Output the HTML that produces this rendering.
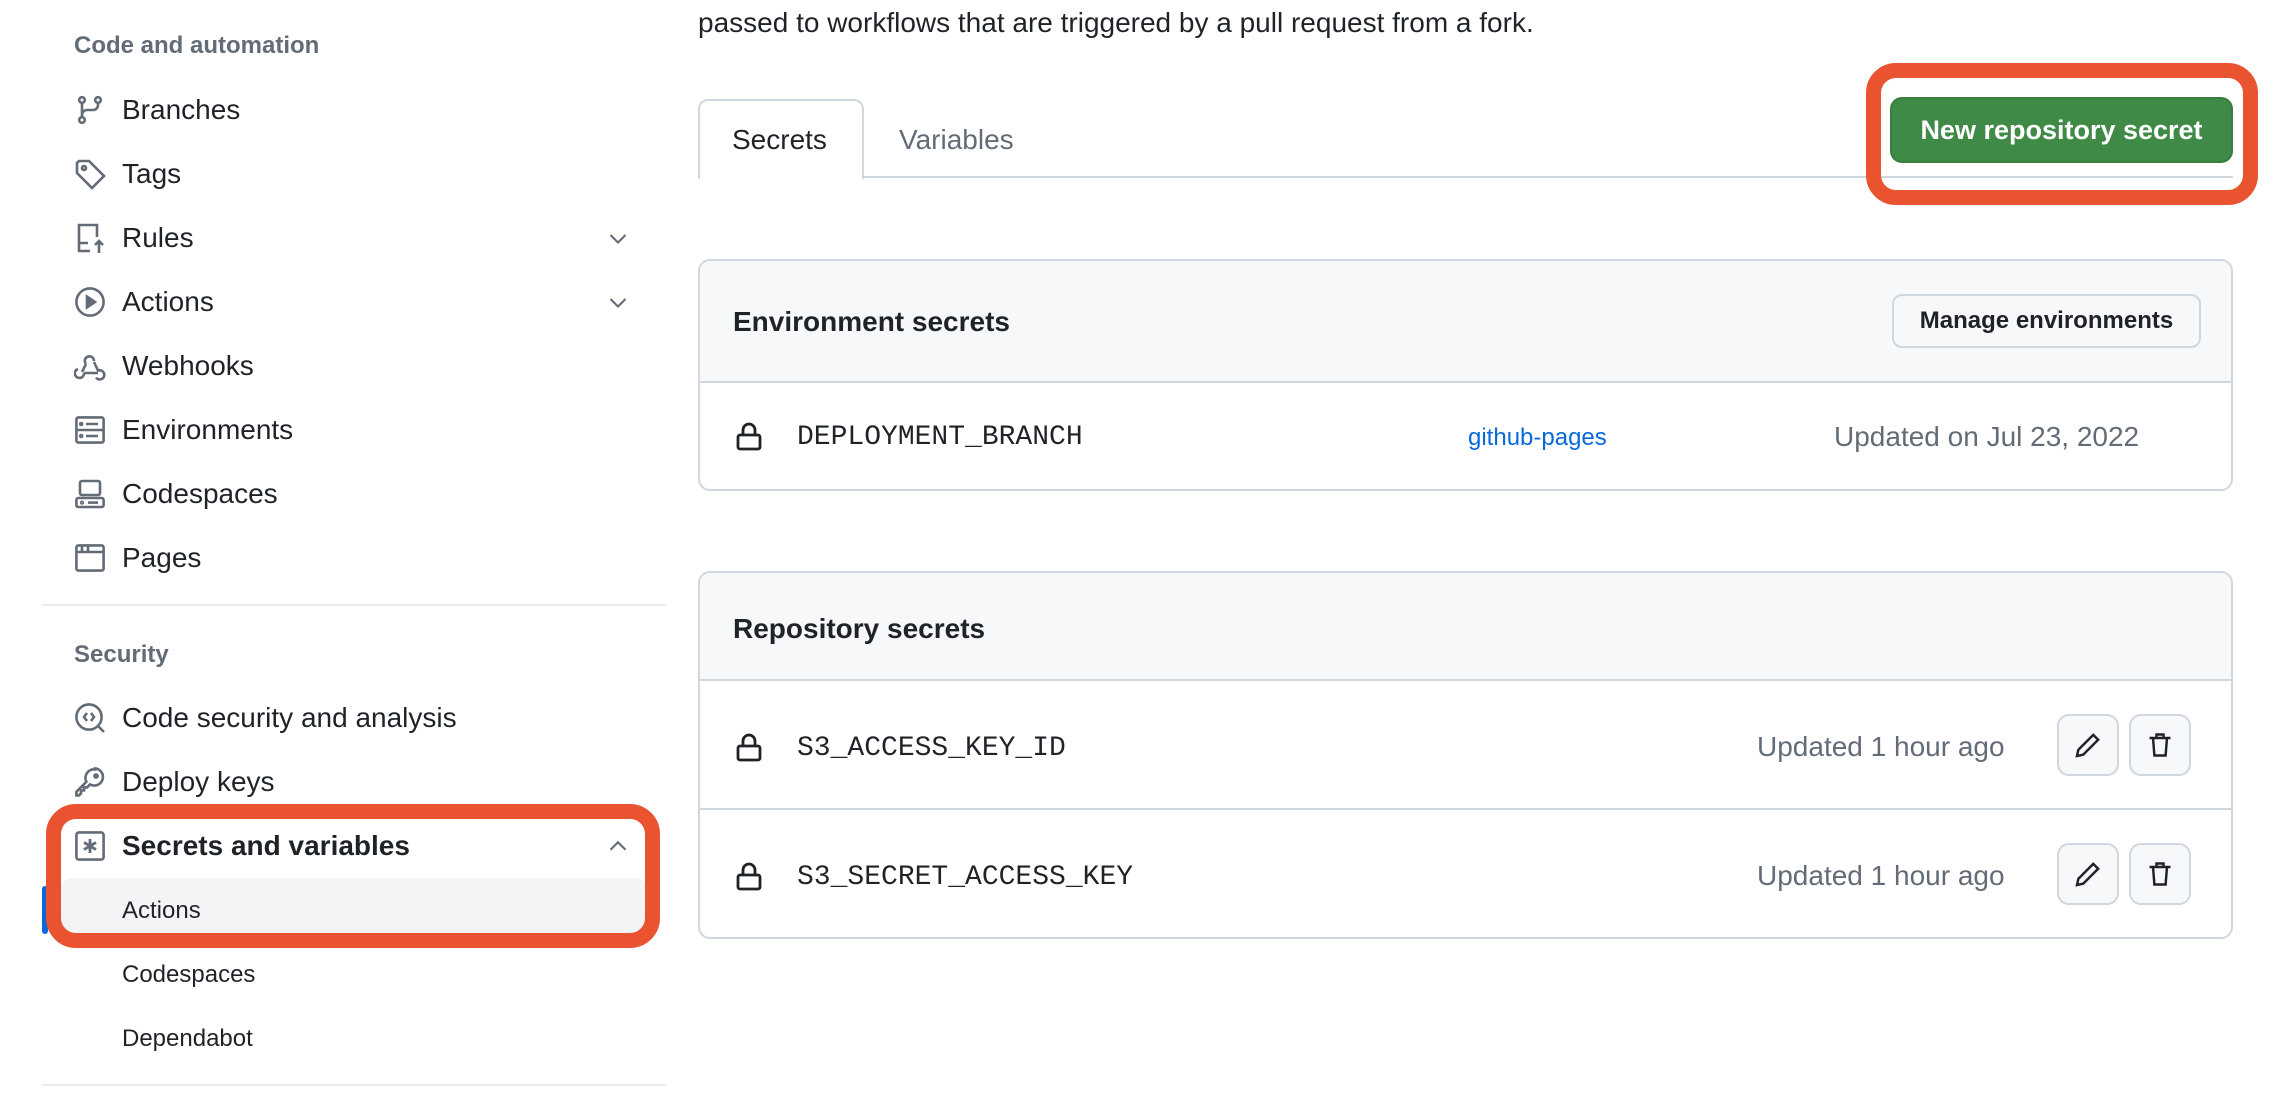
<!DOCTYPE html>
<html><head><meta charset="utf-8"><style>
*{box-sizing:border-box;margin:0;padding:0}
body{width:2280px;height:1112px;background:#fff;font-family:"Liberation Sans",sans-serif;color:#1f2328;position:relative;overflow:hidden}
.a{position:absolute}
.h{font-size:24px;font-weight:bold;color:#636c76}
.it{position:absolute;left:74px;height:40px;display:flex;align-items:center;font-size:28px;color:#1f2328}
.it svg{width:32px;height:32px;margin-right:16px;flex:none}
.sub{position:absolute;left:122px;font-size:24px;color:#1f2328;line-height:30px}
.chev{position:absolute;left:606px;width:24px;height:24px}
.box{position:absolute;left:698px;width:1535px;border:2px solid #d0d7de;border-radius:12px;overflow:hidden}
.bh{background:#f6f8fa;border-bottom:2px solid #d0d7de;position:relative}
.mono{font-family:"Liberation Mono",monospace;font-size:28px;color:#1f2328;position:absolute}
.gray{color:#636c76;font-size:28px;position:absolute}
.ib{position:absolute;width:62px;height:62px;border:2px solid #d0d7de;border-radius:12px;background:#f6f8fa;display:flex;align-items:center;justify-content:center}
</style></head><body>
<div class="a h" style="left:74px;top:32px">Code and automation</div>

<div class="it" style="top:90px"><svg viewBox="0 0 16 16" fill="none" stroke="#636c76" stroke-width="1.3"><circle cx="4" cy="3" r="1.4"/><circle cx="12" cy="3" r="1.4"/><circle cx="4" cy="13" r="1.4"/><path d="M4 4.5v7M12 4.5v1a2.5 2.5 0 0 1-2.5 2.5H6.5A2.5 2.5 0 0 0 4 10.5"/></svg>Branches</div>
<div class="it" style="top:154px"><svg viewBox="0 0 16 16" fill="none" stroke="#636c76" stroke-width="1.3"><path d="M1.5 2.5v5l7.5 7.5 6-6-7.5-7.5h-5z"/><circle cx="5" cy="5" r="1"/></svg>Tags</div>
<div class="it" style="top:218px"><svg viewBox="0 0 16 16" fill="none" stroke="#636c76" stroke-width="1.3"><path d="M8 14.5H2.5v-13h9v6M2.5 10.5H7M12.5 15.5v-6M10.5 11.5l2-2 2 2"/></svg>Rules</div>
<svg class="chev" style="top:226px" viewBox="0 0 16 16" fill="none" stroke="#636c76" stroke-width="1.4"><path d="M3 6l5 5 5-5"/></svg>
<div class="it" style="top:282px"><svg viewBox="0 0 16 16" fill="none" stroke="#636c76" stroke-width="1.3"><circle cx="8" cy="8" r="6.8"/><path d="M6.5 5.3v5.4L10.5 8z" fill="#636c76"/></svg>Actions</div>
<svg class="chev" style="top:290px" viewBox="0 0 16 16" fill="none" stroke="#636c76" stroke-width="1.4"><path d="M3 6l5 5 5-5"/></svg>
<div class="it" style="top:346px"><svg viewBox="0 0 16 16" fill="none" stroke="#636c76" stroke-width="1.3"><path d="M6 7L4 11M6 7a2.3 2.3 0 1 1 4-1.5M10 6l2 4.3a2.3 2.3 0 1 1-1 3.5M12 11.5H5M5 11.5a2.3 2.3 0 1 1-3-2"/></svg>Webhooks</div>
<div class="it" style="top:410px"><svg viewBox="0 0 16 16" fill="none" stroke="#636c76" stroke-width="1.3"><rect x="1.2" y="1.7" width="13.6" height="12.6" rx="1"/><path d="M1.2 8h13.6M6 5h6M6 11h6"/><circle cx="3.6" cy="5" r=".5"/><circle cx="3.6" cy="11" r=".5"/></svg>Environments</div>
<div class="it" style="top:474px"><svg viewBox="0 0 16 16" fill="none" stroke="#636c76" stroke-width="1.3"><rect x="3" y="1.5" width="10" height="7" rx="1"/><rect x="1.2" y="10" width="13.6" height="4.5" rx="1"/><path d="M7 12.3h5"/><circle cx="4" cy="12.3" r=".4"/></svg>Codespaces</div>
<div class="it" style="top:538px"><svg viewBox="0 0 16 16" fill="none" stroke="#636c76" stroke-width="1.3"><rect x="1.2" y="1.7" width="13.6" height="12.6" rx="1"/><path d="M1.2 5h13.6M4 1.7V5M7 1.7V5"/></svg>Pages</div>

<div class="a" style="left:42px;top:604px;width:624px;height:2px;background:#e7eaee"></div>
<div class="a h" style="left:74px;top:641px">Security</div>
<div class="it" style="top:698px"><svg viewBox="0 0 16 16" fill="none" stroke="#636c76" stroke-width="1.3"><circle cx="7.5" cy="7.5" r="6.3"/><path d="M12 12l3 3M6.5 5.5L5 7.5l1.5 2M8.5 5.5L10 7.5l-1.5 2"/></svg>Code security and analysis</div>
<div class="it" style="top:762px"><svg viewBox="0 0 16 16" fill="none" stroke="#636c76" stroke-width="1.3"><path d="M10.5 1.2a4.3 4.3 0 1 1-2.5 8L6.5 10.7H5v1.5H3.5v1.5l-1 1H1.2v-1.8l5-5a4.3 4.3 0 0 1 4.3-6.2z"/><circle cx="11" cy="5" r=".8"/></svg>Deploy keys</div>

<div class="a" style="left:42px;top:886px;width:6px;height:48px;background:#0969da;border-radius:3px"></div>
<div class="a" style="left:61px;top:878px;width:585px;height:56px;background:#f3f4f6;border-radius:10px"></div>
<div class="it" style="top:826px;font-weight:bold"><svg viewBox="0 0 16 16" fill="none" stroke="#636c76" stroke-width="1.3"><rect x="1.2" y="1.2" width="13.6" height="13.6" rx="1.3"/><path d="M8 4.5v7M5 6.2l6 3.6M11 6.2l-6 3.6" stroke-width="1.4"/></svg>Secrets and variables</div>
<svg class="chev" style="top:834px" viewBox="0 0 16 16" fill="none" stroke="#636c76" stroke-width="1.4"><path d="M3 10.5l5-5 5 5"/></svg>
<div class="sub" style="top:896px">Actions</div>
<div class="sub" style="top:960px">Codespaces</div>
<div class="sub" style="top:1024px">Dependabot</div>
<div class="a" style="left:42px;top:1084px;width:624px;height:2px;background:#e7eaee"></div>
<div class="a" style="left:46px;top:804px;width:614px;height:144px;border:15px solid #e9532f;border-radius:30px"></div>

<!-- main -->
<div class="a" style="left:698px;top:7px;font-size:28px;color:#1f2328">passed to workflows that are triggered by a pull request from a fork.</div>
<div class="a" style="left:698px;top:176px;width:1535px;height:2px;background:#d0d7de"></div>
<div class="a" style="left:698px;top:99px;width:166px;height:80px;border:2px solid #d0d7de;border-bottom:none;border-radius:10px 10px 0 0;background:#fff"></div>
<div class="a" style="left:732px;top:124px;font-size:28px">Secrets</div>
<div class="a" style="left:899px;top:124px;font-size:28px;color:#636c76">Variables</div>
<div class="a" style="left:1890px;top:97px;width:343px;height:66px;background:#408a47;border:2px solid #3a7d40;border-radius:12px;color:#fff;font-weight:bold;font-size:27px;display:flex;align-items:center;justify-content:center">New repository secret</div>
<div class="a" style="left:1866px;top:63px;width:392px;height:142px;border:15px solid #e9532f;border-radius:30px"></div>

<div class="box" style="top:259px;height:232px">
 <div class="bh" style="height:122px">
  <div class="a" style="left:33px;top:45px;font-size:28px;font-weight:bold">Environment secrets</div>
  <div class="a" style="left:1192px;top:33px;width:309px;height:54px;border:2px solid #d0d7de;border-radius:10px;background:#f6f8fa;font-size:24px;font-weight:bold;display:flex;align-items:center;justify-content:center">Manage environments</div>
 </div>
 <svg class="a" style="left:36px;top:160px" width="26" height="30" viewBox="0 0 13 15" fill="none" stroke="#1f2328" stroke-width="1.4"><path d="M3.5 7V4.5a3 3 0 0 1 6 0V7"/><rect x="1" y="7" width="11" height="7" rx="1"/></svg>
 <div class="mono" style="left:97px;top:161px">DEPLOYMENT_BRANCH</div>
 <div class="a" style="left:768px;top:163px;font-size:24px;color:#0969da">github-pages</div>
 <div class="gray" style="left:1134px;top:160px">Updated on Jul 23, 2022</div>
</div>

<div class="box" style="top:571px;height:368px">
 <div class="bh" style="height:108px">
  <div class="a" style="left:33px;top:40px;font-size:28px;font-weight:bold">Repository secrets</div>
 </div>
 <svg class="a" style="left:36px;top:159px" width="26" height="30" viewBox="0 0 13 15" fill="none" stroke="#1f2328" stroke-width="1.4"><path d="M3.5 7V4.5a3 3 0 0 1 6 0V7"/><rect x="1" y="7" width="11" height="7" rx="1"/></svg>
 <div class="mono" style="left:97px;top:160px">S3_ACCESS_KEY_ID</div>
 <div class="gray" style="left:1057px;top:158px">Updated 1 hour ago</div>
 <div class="ib" style="left:1357px;top:141px"><svg width="28" height="28" viewBox="0 0 16 16" fill="none" stroke="#1f2328" stroke-width="1.4"><path d="M11 2.2l2.8 2.8-8.5 8.5-3.6.8.8-3.6z"/></svg></div>
 <div class="ib" style="left:1429px;top:141px"><svg width="28" height="28" viewBox="0 0 16 16" fill="none" stroke="#1f2328" stroke-width="1.4"><path d="M2 4h12M6 4V2h4v2M4 4l.8 10h6.4L12 4"/></svg></div>
 <div class="a" style="left:0;top:235px;width:100%;height:2px;background:#d0d7de"></div>
 <svg class="a" style="left:36px;top:288px" width="26" height="30" viewBox="0 0 13 15" fill="none" stroke="#1f2328" stroke-width="1.4"><path d="M3.5 7V4.5a3 3 0 0 1 6 0V7"/><rect x="1" y="7" width="11" height="7" rx="1"/></svg>
 <div class="mono" style="left:97px;top:289px">S3_SECRET_ACCESS_KEY</div>
 <div class="gray" style="left:1057px;top:287px">Updated 1 hour ago</div>
 <div class="ib" style="left:1357px;top:270px"><svg width="28" height="28" viewBox="0 0 16 16" fill="none" stroke="#1f2328" stroke-width="1.4"><path d="M11 2.2l2.8 2.8-8.5 8.5-3.6.8.8-3.6z"/></svg></div>
 <div class="ib" style="left:1429px;top:270px"><svg width="28" height="28" viewBox="0 0 16 16" fill="none" stroke="#1f2328" stroke-width="1.4"><path d="M2 4h12M6 4V2h4v2M4 4l.8 10h6.4L12 4"/></svg></div>
</div>
</body></html>
